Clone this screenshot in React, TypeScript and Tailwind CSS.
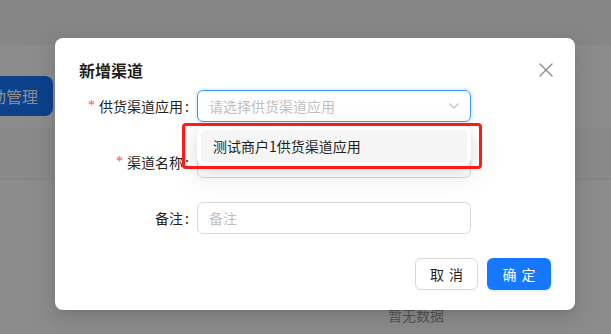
import React from "react";

const font = { fontFamily: '"Noto Sans CJK SC", "Noto Sans", sans-serif' };

function Label({ text, required }: { text: string; required?: boolean }) {
  return (
    <div className="w-[118px] shrink-0 flex justify-end items-center text-sm text-[#1f1f1f]">
      {required && <span className="text-[#ff4d4f] mr-1 text-sm leading-none" style={{ fontFamily: '"Liberation Serif", serif' }}>*</span>}
      <span>{text}</span>
      <span className="ml-[2px] mr-2">:</span>
    </div>
  );
}

export default function App() {
  return (
    <div className="relative w-[611px] h-[334px] overflow-hidden bg-white" style={font}>
      {/* page behind */}
      <div className="h-[45px] bg-[#f5f5f5]" />
      <div className="pt-[31px]">
        <div className="w-[53px] h-10 bg-[#1677ff] rounded-r-lg flex items-center justify-end pr-[15px] overflow-hidden">
          <span className="text-base text-white whitespace-nowrap">动管理</span>
        </div>
      </div>
      <div className="mt-[11px] h-[53px] bg-[#fafafa] border-b border-[#f0f0f0]" />
      <div className="pt-[124px] pl-[388px] text-sm text-[#999999] leading-[22px]">暂无数据</div>

      {/* overlay */}
      <div className="absolute inset-0 bg-black/45" />

      {/* modal */}
      <div className="absolute left-[55px] top-[38px] w-[520px] bg-white rounded-lg px-6 pt-5 pb-5 shadow-[0_6px_16px_0_rgba(0,0,0,0.08),0_3px_6px_-4px_rgba(0,0,0,0.12),0_9px_28px_8px_rgba(0,0,0,0.05)]">
        <div className="flex items-center justify-between mb-2 h-6">
          <div className="text-base font-semibold text-[#1f1f1f] leading-6">新增渠道</div>
          <svg width="14" height="14" viewBox="0 0 14 14" className="mr-[-2px]">
            <path d="M1 1 L13 13 M13 1 L1 13" stroke="#8c8c8c" strokeWidth="1.4" strokeLinecap="round" />
          </svg>
        </div>

        <div className="flex items-center h-8 mb-6">
          <Label text="供货渠道应用" required />
          <div className="w-[274px] h-8 border border-[#4096ff] rounded-md px-[11px] flex items-center justify-between shadow-[0_0_0_2px_rgba(5,145,255,0.1)]">
            <span className="text-sm text-[#bfbfbf]">请选择供货渠道应用</span>
            <svg width="12" height="8" viewBox="0 0 12 8" className="mr-[-1px]">
              <path d="M1.5 1.5 L6 6 L10.5 1.5" stroke="#bfbfbf" strokeWidth="1.2" fill="none" />
            </svg>
          </div>
        </div>

        <div className="flex items-center h-8 mb-6">
          <Label text="渠道名称" required />
          <div className="w-[274px] h-8 border border-[#d9d9d9] rounded-md px-[11px] flex items-center" />
        </div>

        <div className="flex items-center h-8 mb-6">
          <Label text="备注" />
          <div className="w-[274px] h-8 border border-[#d9d9d9] rounded-md px-[11px] flex items-center">
            <span className="text-sm text-[#bfbfbf]">备注</span>
          </div>
        </div>

        <div className="flex justify-end gap-[9px]">
          <button className="w-[63px] h-8 border border-[#d9d9d9] rounded-md bg-white text-sm text-[#1f1f1f] flex items-center justify-center gap-[5px] shadow-[0_2px_0_rgba(0,0,0,0.02)]">
            <span>取</span>
            <span>消</span>
          </button>
          <button className="w-[64px] h-8 rounded-md bg-[#1677ff] text-sm text-white flex items-center justify-center gap-[5px] shadow-[0_2px_0_rgba(5,145,255,0.1)]">
            <span>确</span>
            <span>定</span>
          </button>
        </div>
      </div>

      {/* dropdown */}
      <div className="absolute left-[197px] top-[126px] w-[274px] bg-white rounded-lg p-1 shadow-[0_6px_16px_0_rgba(0,0,0,0.08),0_3px_6px_-4px_rgba(0,0,0,0.12),0_9px_28px_8px_rgba(0,0,0,0.05)]">
        <div className="h-8 bg-[#f5f5f5] rounded px-3 flex items-center text-sm text-[#1f1f1f]">测试商户1供货渠道应用</div>
      </div>

      {/* red highlight */}
      <div className="absolute left-[182px] top-[123px] w-[300px] h-[46px] border-[3px] border-[#ff1a1a] rounded-[4px]" />
    </div>
  );
}
